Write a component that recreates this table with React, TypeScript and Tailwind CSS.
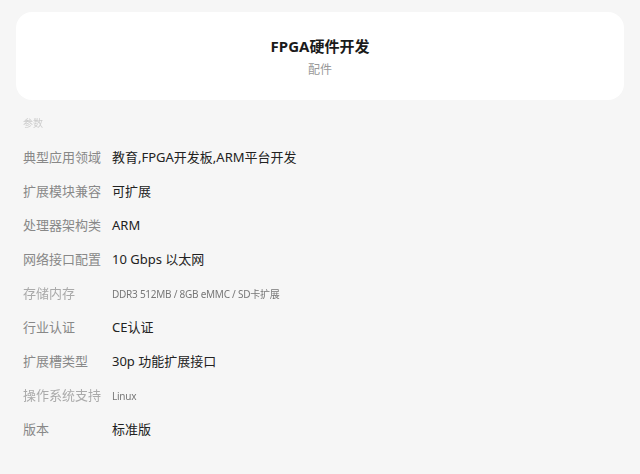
const specs: { label: string; value: string; blur?: boolean }[] = [
  { label: "典型应用领域", value: "教育,FPGA开发板,ARM平台开发" },
  { label: "扩展模块兼容", value: "可扩展" },
  { label: "处理器架构类", value: "ARM" },
  { label: "网络接口配置", value: "10 Gbps 以太网" },
  { label: "存储内存", value: "DDR3 512MB / 8GB eMMC / SD卡扩展", blur: true },
  { label: "行业认证", value: "CE认证" },
  { label: "扩展槽类型", value: "30p 功能扩展接口" },
  { label: "操作系统支持", value: "Linux", blur: true },
  { label: "版本", value: "标准版" },
];

export default function App() {
  return (
    <div
      className="w-[640px] h-[474px] bg-[#f6f6f6] px-4 pt-3 overflow-hidden"
      style={{ fontFamily: '"Noto Sans", "Noto Sans CJK SC", sans-serif' }}
    >
      <div className="h-[88px] bg-white rounded-2xl flex flex-col items-center justify-center">
        <div className="text-[15px] font-bold text-[#1a1a1a] leading-5 mt-[2px]">FPGA硬件开发</div>
        <div className="text-[12px] text-[#999] leading-4 mt-[6px]">配件</div>
      </div>
      <div className="pl-[7px] pr-2 mt-4">
        <div className="text-[10px] text-[#ccc] h-[14px] leading-[14px] blur-[0.6px]">参数</div>
        <div className="mt-[11px] flex flex-col">
          {specs.map((s) => (
            <div key={s.label} className="h-[34px] flex items-center text-[13px]">
              <div className={`w-[89px] ${s.blur ? "text-[#aaa] blur-[0.7px]" : "text-[#888]"}`}>{s.label}</div>
              <div className={s.blur ? "text-[#777] text-[10px] blur-[0.7px] tracking-tight" : "text-[#222]"}>{s.value}</div>
            </div>
          ))}
        </div>
      </div>
    </div>
  );
}
